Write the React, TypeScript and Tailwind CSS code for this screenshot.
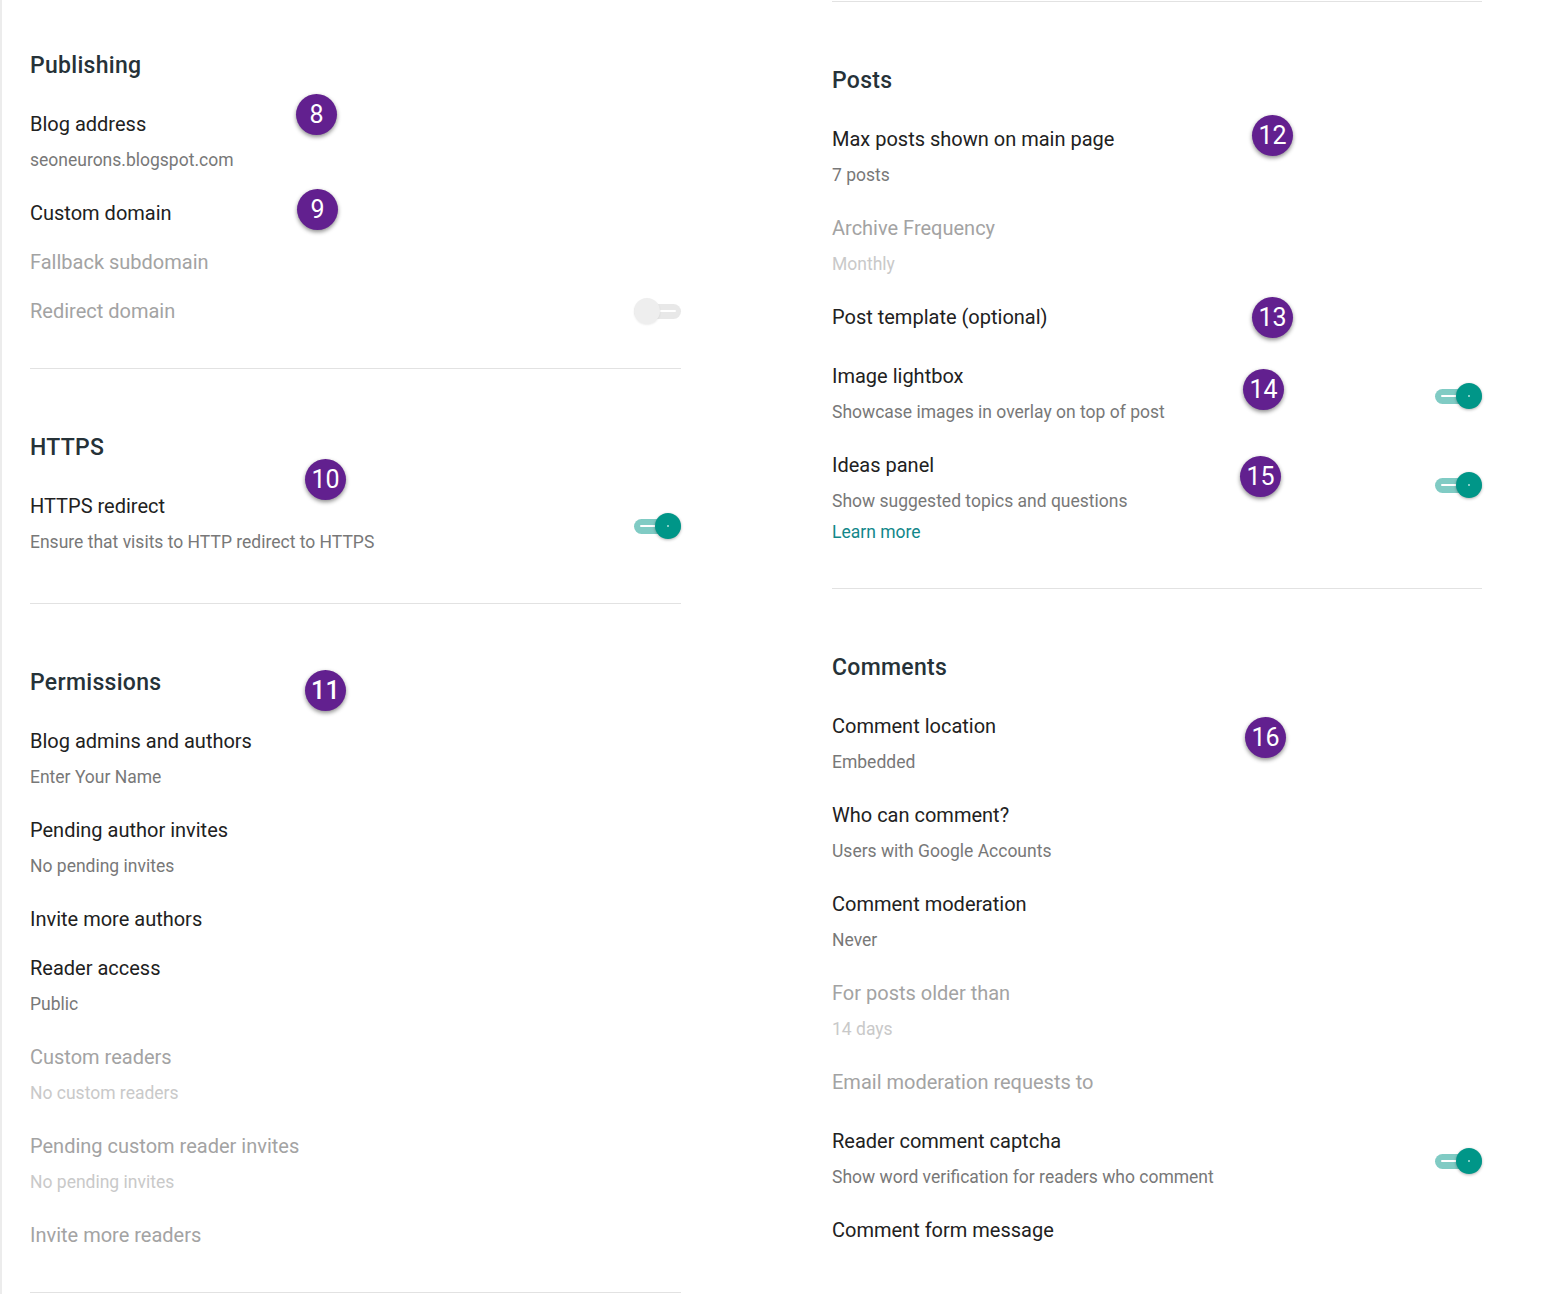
import React from 'react';

type Item = {
    title: string;
    sub?: string;
    disabled?: boolean;
    toggle?: 'on' | 'off';
    link?: string;
    extra?: boolean;
    badge?: { n: number; top: number; left: number };
};

type Section = {
    title: string;
    titleBadge?: { n: number; top: number; left: number };
    items: Item[];
};

const leftSections: Section[] = [
    {
        title: 'Publishing',
        items: [
            { title: 'Blog address', sub: 'seoneurons.blogspot.com', badge: { n: 8, top: -15, left: 266 } },
            { title: 'Custom domain', badge: { n: 9, top: -9, left: 267 } },
            { title: 'Fallback subdomain', disabled: true },
            { title: 'Redirect domain', disabled: true, toggle: 'off' },
        ],
    },
    {
        title: 'HTTPS',
        items: [
            { title: 'HTTPS redirect', sub: 'Ensure that visits to HTTP redirect to HTTPS', toggle: 'on', badge: { n: 10, top: -32, left: 275 } },
        ],
    },
    {
        title: 'Permissions',
        titleBadge: { n: 11, top: 4, left: 275 },
        items: [
            { title: 'Blog admins and authors', sub: 'Enter Your Name' },
            { title: 'Pending author invites', sub: 'No pending invites' },
            { title: 'Invite more authors' },
            { title: 'Reader access', sub: 'Public' },
            { title: 'Custom readers', sub: 'No custom readers', disabled: true },
            { title: 'Pending custom reader invites', sub: 'No pending invites', disabled: true },
            { title: 'Invite more readers', disabled: true },
        ],
    },
];

const rightSections: Section[] = [
    {
        title: 'Posts',
        items: [
            { title: 'Max posts shown on main page', sub: '7 posts', badge: { n: 12, top: -9, left: 420 } },
            { title: 'Archive Frequency', sub: 'Monthly', disabled: true },
            { title: 'Post template (optional)', extra: true, badge: { n: 13, top: -5, left: 420 } },
            { title: 'Image lightbox', sub: 'Showcase images in overlay on top of post', toggle: 'on', badge: { n: 14, top: 8, left: 411 } },
            { title: 'Ideas panel', sub: 'Show suggested topics and questions', toggle: 'on', link: 'Learn more', badge: { n: 15, top: 6, left: 408 } },
        ],
    },
    {
        title: 'Comments',
        items: [
            { title: 'Comment location', sub: 'Embedded', badge: { n: 16, top: 6, left: 413 } },
            { title: 'Who can comment?', sub: 'Users with Google Accounts' },
            { title: 'Comment moderation', sub: 'Never' },
            { title: 'For posts older than', sub: '14 days', disabled: true },
            { title: 'Email moderation requests to', disabled: true, extra: true },
            { title: 'Reader comment captcha', sub: 'Show word verification for readers who comment', toggle: 'on' },
            { title: 'Comment form message' },
        ],
    },
];

const Badge: React.FC<{ n: number; top: number; left: number }> = ({ n, top, left }) => (
    <div
        className="absolute w-[41px] h-[41px] rounded-full bg-[#62208f] text-white text-[25px] leading-none flex items-center justify-center shadow-[0_2px_4px_rgba(0,0,0,0.45)]"
        style={{ top, left }}
    >
        {n}
    </div>
);

const Toggle: React.FC<{ on: boolean }> = ({ on }) => (
    <div className="relative w-[47px] h-[26px] shrink-0">
        <div className={`absolute left-0 right-0 top-[6px] h-[15px] rounded-full ${on ? 'bg-[#80cbc4]' : 'bg-[#e8e8e8]'}`}>
            <div className={`absolute top-[6px] h-[2px] w-[16px] bg-white rounded ${on ? 'left-[6px]' : 'right-[5px]'}`} />
        </div>
        <div
            className={`absolute top-0 w-[26px] h-[26px] rounded-full flex items-center justify-center ${on ? 'right-0 bg-[#009688] shadow-[0_1px_3px_rgba(0,0,0,0.3)]' : 'left-0 bg-[#eeeeee] shadow-[0_1px_2px_rgba(0,0,0,0.08)]'}`}
        >
            {on && <div className="w-[2px] h-[2px] rounded-full bg-[#b2dfdb]" />}
        </div>
    </div>
);

const Row: React.FC<{ item: Item }> = ({ item }) => (
    <div className={`relative ${item.extra ? 'mb-[29px]' : 'mb-[19px]'}`}>
        <div className="flex items-center justify-between">
            <div>
                <div className={`text-[20px] leading-[30px] ${item.disabled ? 'text-[#a3a3a3]' : 'text-[#212121]'}`}>{item.title}</div>
                {item.sub && (
                    <div className={`mt-[9px] mb-[7px] text-[17.5px] leading-[24px] ${item.disabled ? 'text-[#c9c9c9]' : 'text-[#787878]'}`}>{item.sub}</div>
                )}
            </div>
            {item.toggle && <Toggle on={item.toggle === 'on'} />}
        </div>
        {item.link && <div className="pb-[2px] text-[17.5px] leading-[24px] text-[#12878a]">{item.link}</div>}
        {item.badge && <Badge {...item.badge} />}
    </div>
);

const SectionBlock: React.FC<{ section: Section; first?: boolean }> = ({ section, first }) => (
    <div className={first ? '' : 'border-t border-[#e2e2e2] pt-[62px]'}>
        <div className="relative pt-[2px] text-[23px] tracking-[0.3px] leading-[30px] font-medium text-[#263238] mb-[28px]">
            {section.title}
            {section.titleBadge && <Badge {...section.titleBadge} />}
        </div>
        {section.items.map(it => (
            <Row key={it.title} item={it} />
        ))}
        <div className="h-[23px]" />
    </div>
);

export default function App() {
    return (
        <div
            className="w-[1566px] h-[1294px] overflow-hidden bg-white border-l-2 border-[#ececec] flex"
            style={{ fontFamily: 'Roboto, "Liberation Sans", sans-serif' }}
        >
            <div className="w-[651px] ml-[28px] pt-[49px]">
                {leftSections.map((s, i) => (
                    <SectionBlock key={s.title} section={s} first={i === 0} />
                ))}
                <div className="border-t border-[#e2e2e2]" />
            </div>
            <div className="w-[650px] ml-[151px] pt-[1px]">
                {rightSections.map(s => (
                    <SectionBlock key={s.title} section={s} />
                ))}
            </div>
        </div>
    );
}
